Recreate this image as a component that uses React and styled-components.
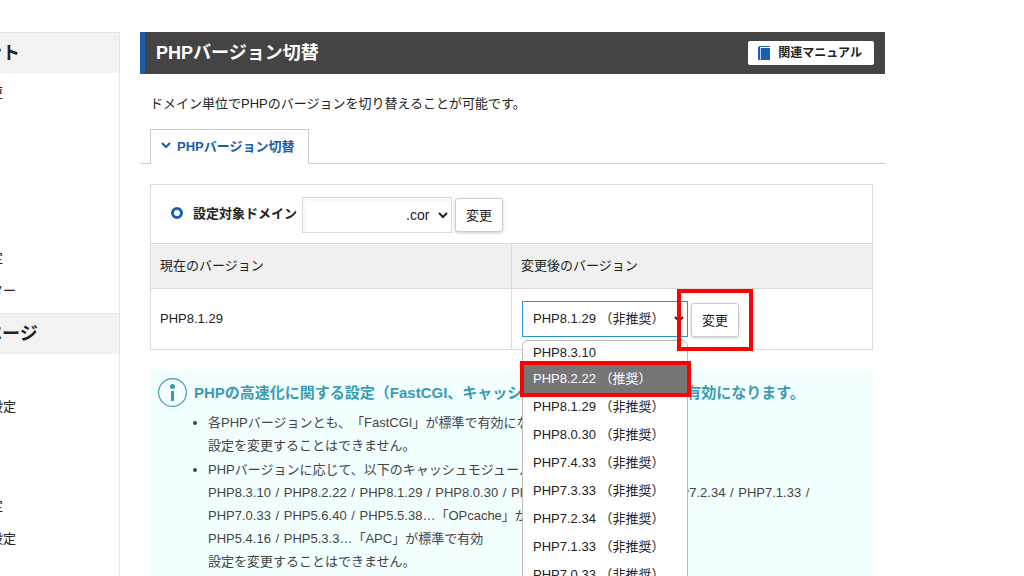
import React, { useState } from 'react';
import styled, { createGlobalStyle } from 'styled-components';

const GlobalStyle = createGlobalStyle`
  * {
    box-sizing: border-box;
  }

  body {
    margin: 0;
    color: #222;
    background: #fff;
    font-family: 'Liberation Sans', 'Noto Sans CJK JP', sans-serif;
    font-size: 13px;
    line-height: 23px;
    text-spacing-trim: space-all;
  }

  button,
  select {
    color: inherit;
    font-family: inherit;
  }
`;

const Page = styled.div`
  height: 100vh;
  overflow: hidden;
  display: flex;
  gap: 20px;
  padding: 32px 139px 0 0;
`;

const Sidebar = styled.nav`
  flex: 0 0 136px;
  margin-left: -16px;
  border-right: 1px solid #e5e5e5;
`;

const SidebarTitle = styled.h2`
  margin: 0;
  height: 41px;
  border-top: 1px solid #e5e5e5;
  background: #f2f2f2;
  font-size: 18px;
  font-weight: bold;
  line-height: 40px;
`;

const SidebarList = styled.ul`
  list-style: none;
  margin: 0;
  padding: 3px 0 6px 6px;
`;

const SidebarItem = styled.li`
  height: 33px;
  line-height: 33px;

  a {
    color: #222;
    text-decoration: none;
  }
`;

const Main = styled.main`
  flex: 1;
  min-width: 0;
`;

const Header = styled.header`
  display: flex;
  align-items: center;
  justify-content: space-between;
  height: 42px;
  padding: 0 11px;
  border-left: 5px solid #1b5faa;
  background: #444;
`;

const Title = styled.h1`
  margin: 0;
  color: #fff;
  font-size: 18px;
  font-weight: bold;
`;

const ManualLink = styled.a`
  display: flex;
  align-items: center;
  gap: 8px;
  height: 24px;
  padding: 0 12px 0 10px;
  border-radius: 2px;
  background: #fff;
  color: #222;
  font-size: 12px;
  font-weight: bold;
  text-decoration: none;
`;

const Lead = styled.p`
  margin: 18px 10px 14px;
`;

const Tabs = styled.div`
  display: flex;
  padding-left: 10px;
  border-bottom: 1px solid #ccc;
`;

const Tab = styled.button`
  display: flex;
  align-items: center;
  gap: 6px;
  height: 35px;
  margin-bottom: -1px;
  padding: 0 14px 4px 10px;
  border: 1px solid #ccc;
  border-bottom: none;
  background: #fff;
  color: #1b5faa;
  font-size: 13px;
  font-weight: bold;
`;

const Content = styled.div`
  padding: 20px 12px 0 10px;
`;

const Table = styled.table`
  width: 100%;
  table-layout: fixed;
  border-collapse: collapse;
`;

const Cell = styled.td`
  height: ${props => props.height || 61}px;
  padding: 0 10px 2px 9px;
  border: 1px solid #dbdbdb;
  background: ${props => (props.as === 'th' ? '#f0f0f0' : '#fff')};
  font-weight: normal;
  text-align: left;
`;

const Controls = styled.div`
  display: flex;
  align-items: center;
  gap: 3px;
  padding: ${props => props.$top || 2}px 0 0 1px;
`;

const DomainLabel = styled.label`
  display: flex;
  align-items: center;
  gap: 10px;
  padding: 0 0 4px 10px;
  margin-right: 2px;
  font-weight: bold;
`;

const Ring = styled.span`
  width: 12px;
  height: 12px;
  border: 3px solid #1b5faa;
  border-radius: 50%;
`;

const SelectBox = styled.div`
  position: relative;
  width: ${props => props.width}px;

  > svg {
    position: absolute;
    top: 14px;
    right: 4px;
    pointer-events: none;
  }
`;

const Select = styled.select`
  appearance: none;
  display: block;
  width: 100%;
  height: 36px;
  padding: 0 20px 2px 10px;
  border: 1px solid #2b93cf;
  border-radius: 0;
  outline: none;
  background: #fff;
  font-size: 13px;
`;

const DomainSelect = styled(Select)`
  padding: 0 20px 0 103px;
  border-color: #dbdbdb;
  box-shadow: inset 3px 3px 0 #f8f8f8;
  font-size: 14px;
`;

const Button = styled.button`
  height: 34px;
  padding: 0 10px 2px;
  border: 1px solid #ccc;
  border-radius: 3px;
  background: #fff;
  box-shadow: 0 1px 3px rgba(0, 0, 0, 0.2);
  font-size: 13px;
`;

const ButtonBox = styled.div`
  position: relative;
  align-self: flex-end;
`;

const Menu = styled.ul`
  position: absolute;
  z-index: 5;
  top: 39px;
  left: 0;
  width: 100%;
  margin: 0;
  padding: 0;
  list-style: none;
  border: 1px solid #bbb;
  border-radius: 6px;
  background: #fff;
`;

const Option = styled.li`
  position: relative;
  height: 28px;
  padding-left: 10px;
  background: ${props => (props.$active ? '#767676' : 'transparent')};
  color: ${props => (props.$active ? '#fff' : '#222')};
  line-height: 28px;
  white-space: nowrap;
  cursor: default;

  &:first-child {
    height: 24px;
    line-height: 24px;
  }
`;

const Highlight = styled.span`
  position: absolute;
  z-index: 10;
  inset: ${props => props.$inset};
  border: 4px solid #f00;
  pointer-events: none;
`;

const Info = styled.section`
  margin-top: 20px;
  padding: 8px 8px 20px;
  min-height: 240px;
  background: #f3feff;
`;

const InfoTitle = styled.h3`
  display: flex;
  align-items: center;
  gap: 7px;
  margin: 0;
  color: #3a9cb1;
  font-size: 15px;
  font-weight: bold;
`;

const InfoList = styled.ul`
  margin: 4px 0 0;
  padding-left: 50px;
  color: #444;

  li + li {
    margin-top: 1px;
  }
`;

const Slash = styled.span`
  margin: 0 1px;
`;

const sections = [
  { title: 'ント', items: ['更', '', '', '', '', '定', 'ター'] },
  { title: 'ページ', items: ['', '設定', '', '', '定', '設定', ''] },
];

const versions = [
  'PHP8.3.10',
  'PHP8.2.22 （推奨）',
  'PHP8.1.29 （非推奨）',
  'PHP8.0.30 （非推奨）',
  'PHP7.4.33 （非推奨）',
  'PHP7.3.33 （非推奨）',
  'PHP7.2.34 （非推奨）',
  'PHP7.1.33 （非推奨）',
  'PHP7.0.33 （非推奨）',
];

const opcacheVersions = [
  'PHP8.3.10',
  'PHP8.2.22',
  'PHP8.1.29',
  'PHP8.0.30',
  'PHP7.4.33',
  'PHP7.3.33',
  'PHP7.2.34',
  'PHP7.1.33',
];

const Chevron = ({ color = '#222' }) => (
  <svg width="10" height="8" viewBox="0 0 10 8" fill="none" stroke={color} strokeWidth="2">
    <path d="M1 2l4 4 4-4" />
  </svg>
);

const BookIcon = () => (
  <svg width="12" height="14" viewBox="0 0 12 14">
    <path d="M2 0h10v1H2v1h10v12H1a1 1 0 0 1-1-1V2a2 2 0 0 1 2-2z" fill="#1b5faa" />
    <path d="M2.5 2v12" stroke="#fff" strokeWidth="1" opacity="0.7" />
  </svg>
);

const InfoIcon = () => (
  <svg width="29" height="29" viewBox="0 0 29 29">
    <circle cx="14.5" cy="14.5" r="13.9" fill="none" stroke="#3a9cb1" strokeWidth="1.2" />
    <circle cx="14.5" cy="8.5" r="2.5" fill="#3a9cb1" />
    <path d="M13 13h3v10h-3z" fill="#3a9cb1" />
  </svg>
);

const Versions = ({ list, trailing }) =>
  list.map((version, i) => (
    <React.Fragment key={version}>
      {version}
      {(trailing || i < list.length - 1) && (
        <>
          {' '}
          <Slash>/</Slash>{' '}
        </>
      )}
    </React.Fragment>
  ));

const VersionSelect = () => {
  const [selected, setSelected] = useState(versions[2]);
  const [active, setActive] = useState(versions[1]);

  return (
    <SelectBox width={166}>
      <Select
        aria-label="変更後のバージョン"
        value={selected}
        onChange={e => setSelected(e.target.value)}
      >
        {versions.map(version => (
          <option key={version}>{version}</option>
        ))}
      </Select>
      <Chevron />
      <Menu role="listbox">
        {versions.map(version => (
          <Option
            key={version}
            role="option"
            aria-selected={version === selected}
            $active={version === active}
            onMouseEnter={() => setActive(version)}
            onClick={() => setSelected(version)}
          >
            {version}
            {version === versions[1] && <Highlight $inset="-4px -4px -4px -3px" />}
          </Option>
        ))}
      </Menu>
    </SelectBox>
  );
};

const App = () => (
  <>
    <GlobalStyle />
    <Page>
      <Sidebar>
        {sections.map(section => (
          <React.Fragment key={section.title}>
            <SidebarTitle>{section.title}</SidebarTitle>
            <SidebarList>
              {section.items.map((item, i) => (
                <SidebarItem key={i}>{item && <a href="#menu">{item}</a>}</SidebarItem>
              ))}
            </SidebarList>
          </React.Fragment>
        ))}
      </Sidebar>
      <Main>
        <Header>
          <Title>PHPバージョン切替</Title>
          <ManualLink href="#manual">
            <BookIcon />
            関連マニュアル
          </ManualLink>
        </Header>
        <Lead>ドメイン単位でPHPのバージョンを切り替えることが可能です。</Lead>
        <Tabs>
          <Tab type="button">
            <Chevron color="#1b5faa" />
            PHPバージョン切替
          </Tab>
        </Tabs>
        <Content>
          <Table>
            <tbody>
              <tr>
                <Cell colSpan={2} height={59}>
                  <Controls $top={4}>
                    <DomainLabel htmlFor="domain">
                      <Ring />
                      設定対象ドメイン
                    </DomainLabel>
                    <SelectBox width={150}>
                      <DomainSelect id="domain">
                        <option>.cor</option>
                      </DomainSelect>
                      <Chevron />
                    </SelectBox>
                    <Button type="button">変更</Button>
                  </Controls>
                </Cell>
              </tr>
              <tr>
                <Cell as="th" height={45} scope="col">
                  現在のバージョン
                </Cell>
                <Cell as="th" height={45} scope="col">
                  変更後のバージョン
                </Cell>
              </tr>
              <tr>
                <Cell>PHP8.1.29</Cell>
                <Cell>
                  <Controls>
                    <VersionSelect />
                    <ButtonBox>
                      <Button type="button">変更</Button>
                      <Highlight $inset="-14px" />
                    </ButtonBox>
                  </Controls>
                </Cell>
              </tr>
            </tbody>
          </Table>
          <Info>
            <InfoTitle>
              <InfoIcon />
              PHPの高速化に関する設定（FastCGI、キャッシュモジュール）が標準で有効になります。
            </InfoTitle>
            <InfoList>
              <li>
                各PHPバージョンとも、「FastCGI」が標準で有効になります。
                <br />
                設定を変更することはできません。
              </li>
              <li>
                PHPバージョンに応じて、以下のキャッシュモジュールが標準で有効になります。
                <br />
                <Versions list={opcacheVersions} trailing />
                <br />
                <Versions list={['PHP7.0.33', 'PHP5.6.40', 'PHP5.5.38']} />
                …「OPcache」が標準で有効
                <br />
                <Versions list={['PHP5.4.16', 'PHP5.3.3']} />
                …「APC」が標準で有効
                <br />
                設定を変更することはできません。
              </li>
            </InfoList>
          </Info>
        </Content>
      </Main>
    </Page>
  </>
);

export default App;
